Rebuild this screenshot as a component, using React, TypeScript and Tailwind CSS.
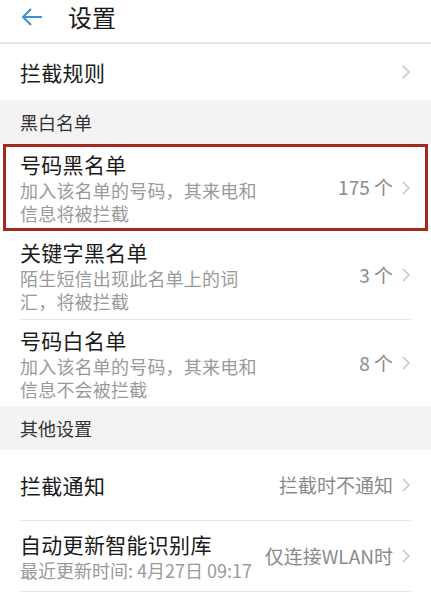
import React from 'react';

const Chevron = () => (
  <svg width="10" height="16" viewBox="0 0 10 16" className="shrink-0 ml-2">
    <path d="M2 2 L8 8 L2 14" fill="none" stroke="#c8c8c8" strokeWidth="1.6" />
  </svg>
);

const Row = ({
  title,
  sub,
  value,
  subClass = 'tracking-[0.2px]',
  className = '',
}: {
  title: string;
  sub?: string;
  value?: string;
  subClass?: string;
  className?: string;
}) => (
  <div className={`flex items-center ${className}`}>
    <div className="flex-1 min-w-0">
      <div className="text-[21px] leading-[28px] text-[#1a1a1a] tracking-[0.3px]">{title}</div>
      {sub && (
        <div className={`text-[18px] leading-[23px] text-[#9a9a9a] mt-[1px] whitespace-pre ${subClass}`}>
          {sub}
        </div>
      )}
    </div>
    {value && <span className="text-[19px] text-[#8a8a8a] whitespace-nowrap">{value}</span>}
    <Chevron />
  </div>
);

const Section = ({ title }: { title: string }) => (
  <div className="h-[44px] bg-[#f3f3f3] flex items-center px-[20px] text-[18px] text-[#333]">{title}</div>
);

export default function App() {
  return (
    <div
      className="w-[431px] h-[600px] bg-white overflow-hidden"
      style={{ fontFamily: '"Noto Sans CJK SC", "Noto Sans", sans-serif' }}
    >
      <div className="h-[44px] flex items-center pb-[8px] border-b-2 border-[#e4e4e4]">
        <svg width="24" height="22" viewBox="0 0 24 22" className="ml-[20px]">
          <path d="M22 11 H3 M11 3 L3 11 L11 19" fill="none" stroke="#3a8fd6" strokeWidth="2" />
        </svg>
        <span className="ml-[24px] text-[24px] leading-[30px] text-[#1a1a1a]">设置</span>
      </div>

      <Row title="拦截规则" className="h-[56px] px-[20px]" />

      <Section title="黑白名单" />

      <div className="mx-[3px] border-[3px] border-[#a32a20]">
        <Row
          title="号码黑名单"
          sub={'加入该名单的号码，其来电和\n信息将被拦截'}
          value="175 个"
          className="h-[81px] pl-[14px] pr-[14px]"
        />
      </div>

      <Row
        title="关键字黑名单"
        sub={'陌生短信出现此名单上的词\n汇，将被拦截'}
        value="3 个"
        className="h-[88px] px-[20px]"
      />
      <div className="mx-[20px] h-px bg-[#e6e6e6]" />
      <Row
        title="号码白名单"
        sub={'加入该名单的号码，其来电和\n信息不会被拦截'}
        value="8 个"
        className="h-[86px] px-[20px]"
      />

      <Section title="其他设置" />

      <Row title="拦截通知" value="拦截时不通知" className="h-[70px] px-[20px]" />
      <div className="mx-[20px] h-px bg-[#e6e6e6]" />
      <Row
        title="自动更新智能识别库"
        sub="最近更新时间: 4月27日 09:17"
        subClass="tracking-[0px]"
        value="仅连接WLAN时"
        className="h-[70px] px-[20px]"
      />
      <div className="mx-[20px] h-px bg-[#e6e6e6]" />
    </div>
  );
}
